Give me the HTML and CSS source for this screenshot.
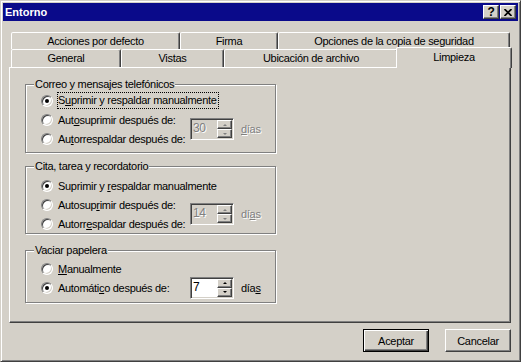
FILE: index.html
```html
<!DOCTYPE html>
<html lang="es">
<head>
	<meta charset="UTF-8">
	<title>Entorno</title>
	<link rel="stylesheet" href="styles.css">
</head>
<body>
	<div class="window">
		<div class="titlebar">
			<span class="title">Entorno</span>
			<div class="caption-btns">
				<span class="cbtn">?</span>
				<span class="cbtn">
					<svg width="8" height="7" viewBox="0 0 8 7"><path d="M0.5 0 L7.5 7 M7.5 0 L0.5 7" stroke="#000" stroke-width="1.7"/></svg>
				</span>
			</div>
		</div>
		<div class="client">
			<div class="tabs">
				<div class="tab-row back">
					<div class="tab t-acc">Acciones por defecto</div>
					<div class="tab t-firma">Firma</div>
					<div class="tab t-opc">Opciones de la copia de seguridad</div>
				</div>
				<div class="tab-row front">
					<div class="tab t-gen">General</div>
					<div class="tab t-vis">Vistas</div>
					<div class="tab t-ubi">Ubicación de archivo</div>
					<div class="tab t-lim active">Limpieza</div>
				</div>
			</div>
			<div class="panel">
				<!-- correo -->
				<div class="group g1">
					<div class="group-title">Correo y mensajes telefónicos</div>
					<div class="opts">
						<div class="opt r1"><span class="radio on"></span><span class="focus">S<u>u</u>primir y respaldar manualmente</span></div>
						<div class="opt r2"><span class="radio"></span><span>Aut<u>o</u>suprimir después de:</span></div>
						<div class="opt r3"><span class="radio"></span><span>Au<u>t</u>orrespaldar después de:</span></div>
						<div class="spin off span2"><span class="val">30</span><span class="arrows"><span class="up"></span><span class="down"></span></span></div>
						<div class="dias off span2"><u>d</u>ías</div>
					</div>
				</div>
				<!-- cita -->
				<div class="group g2">
					<div class="group-title">Cita, tarea y recordatorio</div>
					<div class="opts">
						<div class="opt r1"><span class="radio on"></span><span>Suprimir y <u>r</u>espaldar manualmente</span></div>
						<div class="opt r2"><span class="radio"></span><span>Autosup<u>r</u>imir después de:</span></div>
						<div class="opt r3"><span class="radio"></span><span>Autorr<u>e</u>spaldar después de:</span></div>
						<div class="spin off span2"><span class="val">14</span><span class="arrows"><span class="up"></span><span class="down"></span></span></div>
						<div class="dias off span2">dí<u>a</u>s</div>
					</div>
				</div>
				<!-- papelera -->
				<div class="group g3">
					<div class="group-title">Vaciar papelera</div>
					<div class="opts">
						<div class="opt r1"><span class="radio"></span><span><u>M</u>anualmente</span></div>
						<div class="opt r2"><span class="radio on"></span><span>Automáti<u>c</u>o después de:</span></div>
						<div class="spin on-row2"><span class="val">7</span><span class="arrows"><span class="up"></span><span class="down"></span></span></div>
						<div class="dias on-row2">día<u>s</u></div>
					</div>
				</div>
			</div>
			<div class="actions">
				<div class="btn default">Aceptar</div>
				<div class="btn">Cancelar</div>
			</div>
		</div>
	</div>
</body>
</html>
```

FILE: styles.css
```css
*{
	margin: 0;
	padding: 0;
	box-sizing: border-box;
}
body{
	font: 11px "Liberation Sans", Arial, sans-serif;
	letter-spacing: -0.3px;
	color: #000;
	background: #d4d0c8;
}
u{
	text-underline-offset: 1px;
}
.window{
	width: 521px;
	height: 362px;
	padding: 2px;
	background: #d4d0c8;
	border: 1px solid;
	border-color: #d4d0c8 #404040 #404040 #d4d0c8;
	box-shadow: inset 1px 1px #fff, inset -1px -1px #808080;
	display: flex;
	flex-direction: column;
}
.titlebar{
	height: 18px;
	flex: none;
	background: #0a0a8a;
	display: flex;
	align-items: center;
	justify-content: space-between;
	padding: 0 2px;
}
.title{
	color: #fff;
	font-weight: bold;
	letter-spacing: 0;
}
.caption-btns{
	display: flex;
	gap: 1px;
}
.cbtn{
	width: 16px;
	height: 14px;
	background: #d4d0c8;
	border: 1px solid;
	border-color: #fff #404040 #404040 #fff;
	box-shadow: inset -1px -1px #808080;
	display: flex;
	align-items: center;
	justify-content: center;
	font-weight: bold;
	font-size: 12px;
	line-height: 12px;
}
.client{
	flex: 1;
	padding: 11px 7px 0 6px;
	display: flex;
	flex-direction: column;
}
/* tabs */
.tabs{
	margin-left: 2px;
	width: 499px;
}
.tab-row{
	display: flex;
}
.tab-row.back{
	height: 17px;
}
.tab-row.front{
	height: 18px;
}
.tab{
	flex: none;
	background: #d4d0c8;
	border: 1px solid;
	border-bottom: 0;
	border-color: #fff #404040 transparent #fff;
	box-shadow: inset -1px 0 #808080;
	border-radius: 2px 2px 0 0;
	display: flex;
	align-items: center;
	justify-content: center;
	white-space: nowrap;
	padding-bottom: 1px;
}
.t-acc{ width: 169px; }
.t-firma{ width: 98px; }
.t-opc{ width: 232px; }
.t-gen{ width: 110px; }
.t-vis{ width: 103px; }
.t-ubi{ width: 174px; }
.t-lim{ width: 112px; }
.tab.active{
	width: 116px;
	height: 21px;
	margin: -2px -2px -1px;
	position: relative;
	z-index: 1;
	padding-bottom: 2px;
}
.panel{
	width: 502px;
	height: 256px;
	flex: none;
	border: 1px solid;
	border-color: #fff #404040 #404040 #fff;
	box-shadow: inset -1px -1px #808080;
	padding: 16px 0 0 15px;
}
/* groups */
.group{
	width: 251px;
	border: 1px solid #808080;
	box-shadow: inset 1px 1px #fff, 1px 1px #fff;
	padding-left: 15px;
}
.g1{ height: 69px; }
.g2{ height: 68px; margin-top: 13px; }
.g3{ height: 53px; margin-top: 16px; }
.group-title{
	display: table;
	margin: -7px 0 0 -7px;
	padding: 0 1px;
	line-height: 13px;
	background: #d4d0c8;
}
.opts{
	display: grid;
	grid-template-columns: 149px 44px auto;
	grid-auto-rows: 19px;
	align-items: center;
}
.g2 .opts{ margin-top: 3px; }
.g3 .opts{ margin-top: 2px; }
.opt{
	grid-column: 1;
	display: flex;
	align-items: center;
	white-space: nowrap;
}
.opt.r1{ grid-row: 1; }
.opt.r2{ grid-row: 2; }
.opt.r3{ grid-row: 3; }
.focus{
	border: 1px dotted #000;
	margin-left: -1px;
	padding-right: 1px;
	line-height: 15px;
}
.radio{
	flex: none;
	width: 12px;
	height: 12px;
	margin-right: 5px;
	border-radius: 50%;
	background: #fff;
	border: 1px solid;
	border-color: #808080 #fff #fff #808080;
	box-shadow: inset 1px 1px #404040, inset -1px -1px #d4d0c8;
	display: flex;
	align-items: center;
	justify-content: center;
}
.radio.on::after{
	content: "";
	width: 4px;
	height: 4px;
	border-radius: 50%;
	background: #000;
}
/* spinner */
.spin{
	grid-column: 2;
	width: 44px;
	height: 22px;
	padding: 1px;
	background: #fff;
	border: 1px solid;
	border-color: #808080 #fff #fff #808080;
	box-shadow: inset 1px 1px #404040, inset -1px -1px #d4d0c8;
	display: flex;
}
.spin.off{
	background: #d4d0c8;
	color: #808080;
	text-shadow: 1px 1px #fff;
}
.span2{
	grid-row: 2 / span 2;
}
.on-row2{
	grid-row: 2;
}
.val{
	flex: 1;
	line-height: 17px;
	padding-left: 1px;
	font-size: 12px;
}
.arrows{
	width: 15px;
	display: flex;
	flex-direction: column;
}
.arrows span{
	flex: 1;
	background: #d4d0c8;
	border: 1px solid;
	border-color: #fff #404040 #404040 #fff;
	box-shadow: inset -1px -1px #808080;
	display: flex;
	align-items: center;
	justify-content: center;
}
.arrows .up::after,
.arrows .down::after{
	content: "";
	border-left: 2px solid transparent;
	border-right: 2px solid transparent;
}
.arrows .up::after{
	border-bottom: 2px solid #000;
}
.arrows .down::after{
	border-top: 2px solid #000;
}
.spin.off .arrows .up::after{
	border-bottom-color: #808080;
}
.spin.off .arrows .down::after{
	border-top-color: #808080;
}
.dias{
	grid-column: 3;
	padding-left: 7px;
}
.dias.off{
	color: #808080;
	text-shadow: 1px 1px #fff;
}
/* buttons */
.actions{
	display: flex;
	justify-content: flex-end;
	gap: 16px;
	margin-top: 6px;
}
.btn{
	width: 66px;
	height: 23px;
	border: 1px solid;
	border-color: #fff #404040 #404040 #fff;
	box-shadow: inset -1px -1px #808080;
	display: flex;
	align-items: center;
	justify-content: center;
}
.btn.default{
	border: 1px solid #000;
	box-shadow: inset 1px 1px #fff, inset -1px -1px #404040, inset -2px -2px #808080;
}
```
